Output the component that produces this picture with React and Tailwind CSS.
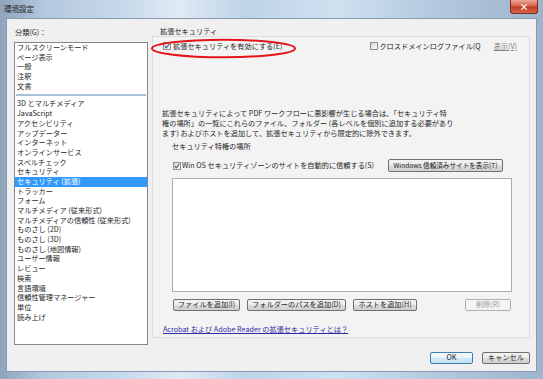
import React from "react";

const topItems = ["フルスクリーンモード", "ページ表示", "一般", "注釈", "文書"];
const restItems = [
  "3D とマルチメディア",
  "JavaScript",
  "アクセシビリティ",
  "アップデーター",
  "インターネット",
  "オンラインサービス",
  "スペルチェック",
  "セキュリティ",
  "セキュリティ (拡張)",
  "トラッカー",
  "フォーム",
  "マルチメディア (従来形式)",
  "マルチメディアの信頼性 (従来形式)",
  "ものさし (2D)",
  "ものさし (3D)",
  "ものさし (地図情報)",
  "ユーザー情報",
  "レビュー",
  "検索",
  "言語環境",
  "信頼性管理マネージャー",
  "単位",
  "読み上げ",
];

function Check({ on }) {
  return (
    <span className="w-[8px] h-[8px] shrink-0 border border-[#8e8f8f] bg-[linear-gradient(135deg,#d8d8d8,#ffffff)] flex items-center justify-center">
      {on && (
        <svg width="6" height="6" viewBox="0 0 6 6">
          <path d="M0.7 3.1 L2.3 4.9 L5.3 0.9" fill="none" stroke="#4b5e78" strokeWidth="1.1" />
        </svg>
      )}
    </span>
  );
}

function Btn({ className, children }) {
  return (
    <div
      className={
        "h-[12px] rounded-[2px] border flex items-center justify-center leading-none whitespace-nowrap " +
        className
      }
    >
      {children}
    </div>
  );
}

const normal =
  "border-[#707070] bg-[linear-gradient(#f2f2f2_0%,#ebebeb_50%,#dddddd_50%,#cfcfcf_100%)]";

export default function App() {
  return (
    <div className="w-[543px] h-[379px] flex flex-col overflow-hidden font-['Noto_Sans_CJK_JP',sans-serif] text-[#1e1e1e] bg-[linear-gradient(90deg,#8ea4bb_0%,#b4c8de_8%,#c6d8ea_22%,#dfeaf5_33%,#bfd3e8_45%,#cfe0f0_62%,#b4c9df_80%,#9db4cc_100%)]">
      {/* title bar */}
      <div className="h-[18px] shrink-0 flex items-start justify-between">
        <span className="pl-[4px] pt-[4px] text-[7.5px] leading-[10px]">環境設定</span>
        <div className="mr-[5px] w-[28px] h-[14px] rounded-b-[3px] border border-t-0 border-[#7a2d20] bg-[linear-gradient(#eaa897_0%,#d4644f_45%,#c13c22_55%,#d9664b_100%)] flex items-center justify-center text-white text-[9px] font-bold leading-none">
          ×
        </div>
      </div>

      {/* body */}
      <div className="flex-1 mx-[6px] mb-[7px] border border-[#8a9bb0] bg-[#f0f0f0] flex text-[7.2px]">
        {/* left */}
        <div className="w-[145px] shrink-0 pl-[7px] pt-[8px] flex flex-col">
          <div className="h-[10px] leading-[10px] pl-[1px]">分類(G)：</div>
          <div className="mt-[5px] w-[134px] h-[303px] border border-[#828790] bg-white flex flex-col leading-[9.7px]">
            {topItems.map((t) => (
              <div key={t} className="pl-[2px] h-[9.7px] whitespace-nowrap">
                {t}
              </div>
            ))}
            <div className="mx-[1px] mt-[3px] mb-[3px] h-[2px] bg-[#a9c1d8]" />
            {restItems.map((t) => (
              <div
                key={t}
                className={
                  t === "セキュリティ (拡張)"
                    ? "pl-[2px] h-[9.7px] whitespace-nowrap bg-[#3399ff] text-white"
                    : "pl-[2px] h-[9.7px] whitespace-nowrap"
                }
              >
                {t}
              </div>
            ))}
          </div>
        </div>

        {/* right */}
        <div className="flex-1 flex flex-col pt-[7px]">
          <div className="pl-[8px] h-[10px] leading-[10px]">拡張セキュリティ</div>
          <div className="relative mr-[6px] h-[302px] border border-[#dcdcdc] bg-[#f3f3f3] flex flex-col">
            <svg className="absolute left-[-3px] top-[1px]" width="147" height="21" viewBox="0 0 147 21">
              <ellipse cx="73.5" cy="10.5" rx="71.5" ry="8.8" fill="none" stroke="#e3141c" strokeWidth="2" />
            </svg>
            <div className="mt-[4px] h-[10px] pl-[10px] pr-[12px] flex items-center">
              <Check on />
              <span className="ml-[2px] whitespace-nowrap">拡張セキュリティを有効にする(E)</span>
              <div className="ml-auto flex items-center">
                <Check />
                <span className="ml-[1px] whitespace-nowrap">クロスドメインログファイル(Q</span>
                <span className="ml-[13px] text-[#808080] underline">表示(V)</span>
              </div>
            </div>

            <p className="mt-[57px] pl-[9px] leading-[10px] whitespace-nowrap">
              拡張セキュリティによって PDF ワークフローに悪影響が生じる場合は、「セキュリティ特
              <br />
              権の場所」の一覧にこれらのファイル、フォルダー (各レベルを個別に追加する必要があり
              <br />
              ます) およびホストを追加して、拡張セキュリティから限定的に除外できます。
            </p>

            <div className="mt-[3px] pl-[19px] h-[10px] leading-[10px]">セキュリティ特権の場所</div>

            <div className="pl-[19px] pr-[17px] flex flex-col">
              <div className="mt-[8px] h-[13px] pl-[1px] flex items-center">
                <Check on />
                <span className="ml-[1px] whitespace-nowrap">Win OS セキュリティゾーンのサイトを自動的に信頼する(S)</span>
                <Btn className={"ml-auto mr-[9px] w-[115px] h-[13px] text-[6.6px] " + normal}>
                  Windows 信頼済みサイトを表示(T)
                </Btn>
              </div>
              <div className="mt-[6px] h-[114px] border border-[#abadb3] bg-white" />
              <div className="mt-[7px] px-[1px] flex items-center gap-[7px]">
                <Btn className={"w-[67px] " + normal}>ファイルを追加(I)</Btn>
                <Btn className={"w-[99px] " + normal}>フォルダーのパスを追加(D)</Btn>
                <Btn className={"w-[64px] " + normal}>ホストを追加(H)</Btn>
                <Btn className="ml-auto w-[46px] border-[#adb2b5] bg-[#f4f4f4] text-[#9a9a9a]">削除(R)</Btn>
              </div>
            </div>

            <div className="mt-[13px] pl-[10px] h-[10px] leading-[10px]">
              <span className="text-[#2b2ba6] underline">Acrobat および Adobe Reader の拡張セキュリティとは？</span>
            </div>
          </div>

          <div className="mt-[14px] pr-[6px] flex justify-end gap-[9px]">
            <Btn className="w-[43px] border-[#3c7fb1] bg-[linear-gradient(#f4f9fc_0%,#e5f1f9_50%,#d4e8f5_50%,#c6e0f2_100%)]">OK</Btn>
            <Btn className={"w-[48px] " + normal}>キャンセル</Btn>
          </div>
        </div>
      </div>
    </div>
  );
}
